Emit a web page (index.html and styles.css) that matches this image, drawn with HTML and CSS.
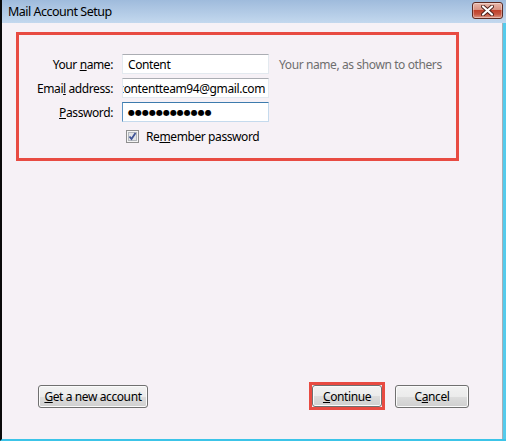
FILE: index.html
```html
<!DOCTYPE html>
<html lang="en">
<head>
  <meta charset="UTF-8">
  <title>Mail Account Setup</title>
  <link rel="stylesheet" href="styles.css">
</head>
<body>
  <div class="window">
    <div class="titlebar">
      <span class="title">Mail Account Setup</span>
      <button class="close-button" aria-label="Close">
        <svg width="13" height="11" viewBox="0 0 13 11">
          <path d="M2 1.5 L11 9.5 M11 1.5 L2 9.5" stroke="#4a1f1a" stroke-width="4" stroke-linecap="round"/>
          <path d="M2 1.5 L11 9.5 M11 1.5 L2 9.5" stroke="#fff" stroke-width="2.2" stroke-linecap="round"/>
        </svg>
      </button>
    </div>
    <div class="content">
      <!-- form highlighted with the red box -->
      <div class="setup-box">
        <div class="setup-form">
          <label class="label">Your <u>n</u>ame:</label>
          <div class="field">Content</div>
          <span class="hint">Your name, as shown to others</span>

          <label class="label">Emai<u>l</u> address:</label>
          <div class="field field-scrolled"><span>contentteam94@gmail.com</span></div>
          <span></span>

          <label class="label"><u>P</u>assword:</label>
          <div class="field field-focused"><span class="dots">●●●●●●●●●●●●</span></div>
          <span></span>

          <span></span>
          <label class="remember">
            <svg class="checkbox" width="13" height="13" viewBox="0 0 13 13">
              <rect x="0.5" y="0.5" width="12" height="12" fill="#f4f4f4" stroke="#8f8f8f"/>
              <rect x="2.5" y="2.5" width="8" height="8" fill="#e2e4e8" stroke="#b4b8be"/>
              <path d="M3.5 6.5 L5.5 9 L9.5 3" fill="none" stroke="#3f5496" stroke-width="1.8"/>
            </svg>
            <span>Re<u>m</u>ember password</span>
          </label>
          <span></span>
        </div>
      </div>

      <div class="spacer"></div>

      <div class="actions">
        <button class="button button-new"><u>G</u>et a new account</button>
        <div class="actions-right">
          <div class="highlight">
            <button class="button button-continue"><u>C</u>ontinue</button>
          </div>
          <button class="button button-cancel">C<u>a</u>ncel</button>
        </div>
      </div>
    </div>
  </div>
</body>
</html>
```

FILE: styles.css
```css
* {
  box-sizing: border-box;
}
body {
  margin: 0;
  font-family: 'Noto Sans', sans-serif;
  font-size: 12px;
  letter-spacing: -0.4px;
  color: #000;
  background: #fff;
}
.window {
  width: 506px;
  height: 441px;
  display: flex;
  flex-direction: column;
  border-left: 2px solid #0a0a0a;
  border-bottom: 2px solid #3cc4e8;
}
.titlebar {
  height: 23px;
  flex: none;
  display: flex;
  align-items: center;
  padding-left: 6px;
  padding-right: 3px;
  background: linear-gradient(#9fbbdc, #c3d8ee);
}
.title {
  font-size: 12.5px;
  letter-spacing: -0.5px;
  color: #000;
  margin-top: -1px;
}
.close-button {
  margin-left: auto;
  margin-top: -2px;
  width: 31px;
  height: 17px;
  padding: 0;
  border: 1px solid #5e2a22;
  border-radius: 3px;
  background: linear-gradient(#e9b8ab 0%, #d99383 45%, #c0412b 50%, #c65540 75%, #dd9a89 100%);
  box-shadow: inset 0 0 0 1px rgba(255,255,255,0.35);
  display: flex;
  align-items: center;
  justify-content: center;
}
.content {
  flex: 1;
  display: flex;
  flex-direction: column;
  background: #f6f1f6;
  border-right: 3px solid #55cbec;
  box-shadow: inset -1px 0 0 #a6afb8;
}
.setup-box {
  align-self: flex-start;
  width: 443px;
  margin: 9px 0 0 14px;
  border: 3px solid #e84b42;
  padding: 19px 0 12px 0;
}
.setup-form {
  display: grid;
  grid-template-columns: 94px 147px auto;
  grid-auto-rows: 20px;
  column-gap: 9px;
  row-gap: 4px;
  align-items: center;
}
.label {
  text-align: right;
}
.hint {
  color: #6e6e6e;
  margin-left: 1px;
}
.field {
  height: 20px;
  background: #fff;
  border: 1px solid #e3e9ef;
  border-top-color: #abadb3;
  display: flex;
  align-items: center;
  padding: 0 3px 0 5px;
  overflow: hidden;
  white-space: nowrap;
}
.field-scrolled {
  justify-content: flex-end;
}
.field-focused {
  border-color: #c5daed;
  border-top-color: #3d7bad;
  border-left-color: #5b92c2;
}
.dots {
  font-family: 'DejaVu Sans', sans-serif;
  font-size: 8px;
  letter-spacing: 0;
}
.remember {
  display: flex;
  align-items: center;
  gap: 7px;
  padding-left: 4px;
  white-space: nowrap;
}
.checkbox {
  flex: none;
}
.spacer {
  flex: 1;
}
.actions {
  display: flex;
  align-items: center;
  justify-content: space-between;
  padding: 0 34px 29px 36px;
}
.actions-right {
  display: flex;
  align-items: center;
  gap: 10px;
}
.button {
  height: 23px;
  padding: 0;
  font: inherit;
  letter-spacing: inherit;
  color: #000;
  border: 1px solid #707070;
  border-radius: 3px;
  background: linear-gradient(#f2f2f2 0%, #ebebeb 50%, #dddddd 51%, #cfcfcf 100%);
  box-shadow: inset 0 0 0 1px #fbfbfb;
}
.button-new {
  width: 110px;
}
.highlight {
  border: 3px solid #e84b42;
  display: flex;
}
.button-continue {
  width: 70px;
  height: 22px;
}
.button-cancel {
  width: 74px;
}
```
